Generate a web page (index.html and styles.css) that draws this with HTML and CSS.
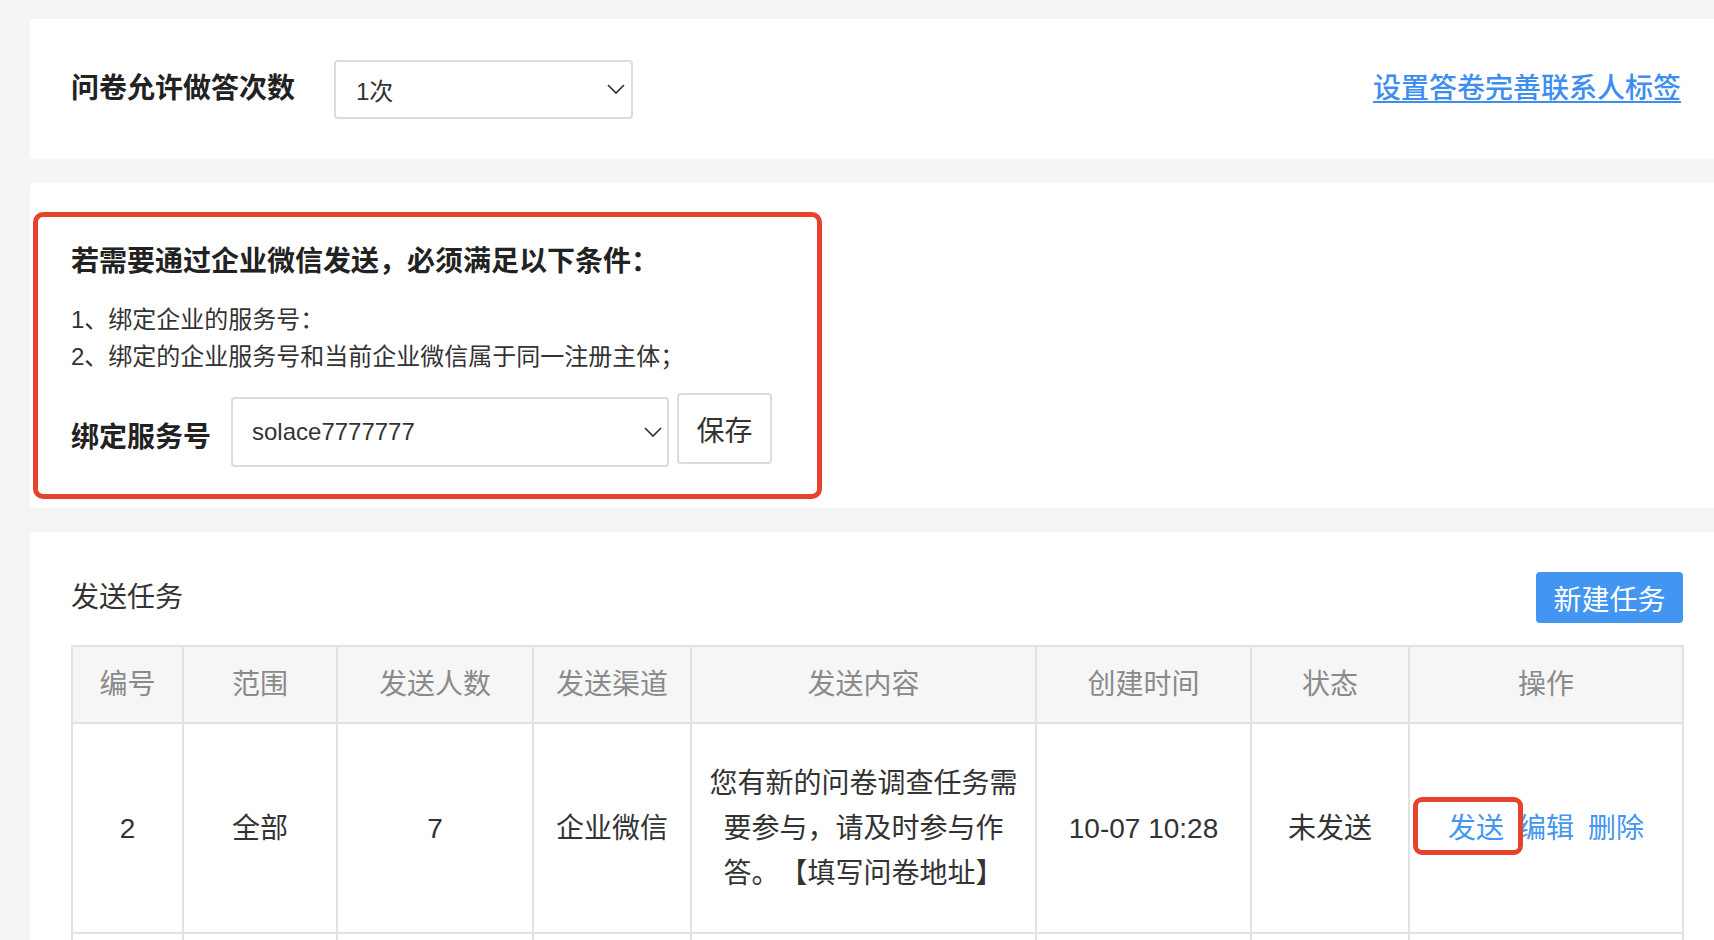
FILE: index.html
```html
<!DOCTYPE html>
<html lang="zh-CN">
<head>
<meta charset="utf-8">
<title>发送任务</title>
<link rel="stylesheet" href="styles.css">
</head>
<body>
<div class="page">
  <section class="card card-settings">
    <span class="field-label">问卷允许做答次数</span>
    <div class="select select-times">
      <span>1次</span>
      <svg class="chev" width="18" height="10" viewBox="0 0 18 10"><polyline points="1,1 9,9 17,1" fill="none" stroke="#333" stroke-width="1.7"/></svg>
    </div>
    <a class="tag-link" href="#">设置答卷完善联系人标签</a>
  </section>

  <section class="card card-wechat">
    <div class="notice">
      <h3 class="notice-title">若需要通过企业微信发送，必须满足以下条件：</h3>
      <ul class="notice-list">
        <li>1、绑定企业的服务号：</li>
        <li>2、绑定的企业服务号和当前企业微信属于同一注册主体；</li>
      </ul>
      <div class="bind-row">
        <span class="bind-label">绑定服务号</span>
        <div class="select select-account">
          <span>solace7777777</span>
          <svg class="chev" width="18" height="10" viewBox="0 0 18 10"><polyline points="1,1 9,9 17,1" fill="none" stroke="#333" stroke-width="1.7"/></svg>
        </div>
        <button class="btn-save" type="button">保存</button>
      </div>
    </div>
  </section>

  <section class="card card-tasks">
    <div class="tasks-head">
      <span class="tasks-title">发送任务</span>
      <button class="btn-primary" type="button">新建任务</button>
    </div>
    <table class="tasks">
      <colgroup>
        <col class="c-id"><col class="c-scope"><col class="c-count"><col class="c-channel">
        <col class="c-content"><col class="c-time"><col class="c-status"><col class="c-ops">
      </colgroup>
      <thead>
        <tr><th>编号</th><th>范围</th><th>发送人数</th><th>发送渠道</th><th>发送内容</th><th>创建时间</th><th>状态</th><th>操作</th></tr>
      </thead>
      <tbody>
        <tr>
          <td>2</td><td>全部</td><td>7</td><td>企业微信</td>
          <td>您有新的问卷调查任务需要参与，请及时参与作答。【填写问卷地址】</td>
          <td>10-07 10:28</td><td>未发送</td>
          <td><div class="ops"><a class="op op-send" href="#">发送</a><a class="op" href="#">编辑</a><a class="op" href="#">删除</a></div></td>
        </tr>
        <tr class="row-next">
          <td></td><td></td><td></td><td></td><td></td><td></td><td></td><td></td>
        </tr>
      </tbody>
    </table>
  </section>
</div>
</body>
</html>
```

FILE: styles.css
```css
html, body {
  margin: 0;
  background: #f5f5f5;
}
body {
  font-family: "Liberation Sans", "Noto Sans CJK SC", sans-serif;
  color: #333;
  text-spacing-trim: space-all;
}
.page {
  padding: 19px 0 0 30px;
  display: flex;
  flex-direction: column;
  gap: 24px;
}
.card {
  background: #fff;
  border-radius: 4px 0 0 4px;
}

/* card 1 */
.card-settings {
  height: 140px;
  box-sizing: border-box;
  display: flex;
  align-items: center;
  padding: 0 33px 0 41px;
}
.field-label {
  font-size: 28px;
  font-weight: 700;
  line-height: 40px;
  color: #222;
}
.select {
  display: flex;
  align-items: center;
  justify-content: space-between;
  box-sizing: border-box;
  border: 2px solid #dcdcdc;
  border-radius: 4px;
  background: #fff;
  font-size: 24px;
  color: #333;
}
.chev {
  display: block;
  flex: none;
}
.select-times {
  width: 299px;
  height: 59px;
  margin-left: 39px;
  padding: 0 6px 0 20px;
}
.tag-link {
  margin-left: auto;
  font-size: 28px;
  font-weight: 500;
  line-height: 40px;
  color: #3d8ef0;
  text-decoration: underline;
  text-decoration-thickness: 2px;
  text-underline-offset: 3px;
}

/* card 2 */
.card-wechat {
  padding: 29px 0 9px 3px;
}
.notice {
  width: 789px;
  box-sizing: border-box;
  border: 5px solid #e6432d;
  border-radius: 10px;
  padding: 25px 33px 27px;
}
.notice-title {
  margin: 0;
  font-size: 28px;
  font-weight: 700;
  line-height: 40px;
  color: #222;
}
.notice-list {
  list-style: none;
  margin: 19px 0 0;
  padding: 0;
  font-size: 24px;
  line-height: 37px;
  color: #333;
}
.bind-row {
  display: flex;
  align-items: flex-start;
  margin-top: 18px;
}
.bind-label {
  width: 140px;
  margin-top: 25px;
  font-size: 28px;
  font-weight: 700;
  line-height: 40px;
  color: #222;
}
.select-account {
  width: 438px;
  height: 70px;
  margin: 4px 0 0 20px;
  padding: 0 5px 0 19px;
}
.btn-save {
  margin-left: 8px;
  width: 95px;
  height: 71px;
  box-sizing: border-box;
  border: 2px solid #dcdcdc;
  border-radius: 4px;
  background: #fff;
  padding: 0;
  font-family: inherit;
  font-size: 28px;
  color: #333;
}

/* card 3 */
.card-tasks {
  padding: 40px 31px 0 41px;
}
.tasks-head {
  display: flex;
  align-items: center;
  justify-content: space-between;
  height: 51px;
}
.tasks-title {
  font-size: 28px;
  line-height: 40px;
  color: #333;
}
.btn-primary {
  width: 147px;
  height: 51px;
  border: none;
  border-radius: 4px;
  background: #4295f0;
  color: #fff;
  padding: 0;
  font-family: inherit;
  font-size: 28px;
}
.tasks {
  margin-top: 22px;
  width: 1611px;
  border-collapse: collapse;
  table-layout: fixed;
  font-size: 28px;
}
.c-id { width: 111px; }
.c-scope { width: 154px; }
.c-count { width: 196px; }
.c-channel { width: 158px; }
.c-content { width: 345px; }
.c-time { width: 215px; }
.c-status { width: 158px; }
.c-ops { width: 274px; }
.tasks th,
.tasks td {
  border: 2px solid #e2e2e2;
  text-align: center;
  vertical-align: middle;
}
.tasks th {
  background: #f6f6f6;
  color: #8a8a8a;
  font-weight: 400;
  line-height: 40px;
  padding: 17.5px 0;
}
.tasks td {
  line-height: 45px;
  padding: 36.5px 16px;
  color: #333;
}
.tasks .row-next td {
  height: 135px;
}
.ops {
  display: flex;
  justify-content: center;
  gap: 14px;
}
.op {
  color: #4596ef;
  text-decoration: none;
}
.op-send {
  position: relative;
}
.op-send::after {
  content: "";
  position: absolute;
  left: -35px;
  right: -19px;
  top: -9px;
  bottom: -4px;
  border: 5px solid #e6432d;
  border-radius: 9px;
}
```
